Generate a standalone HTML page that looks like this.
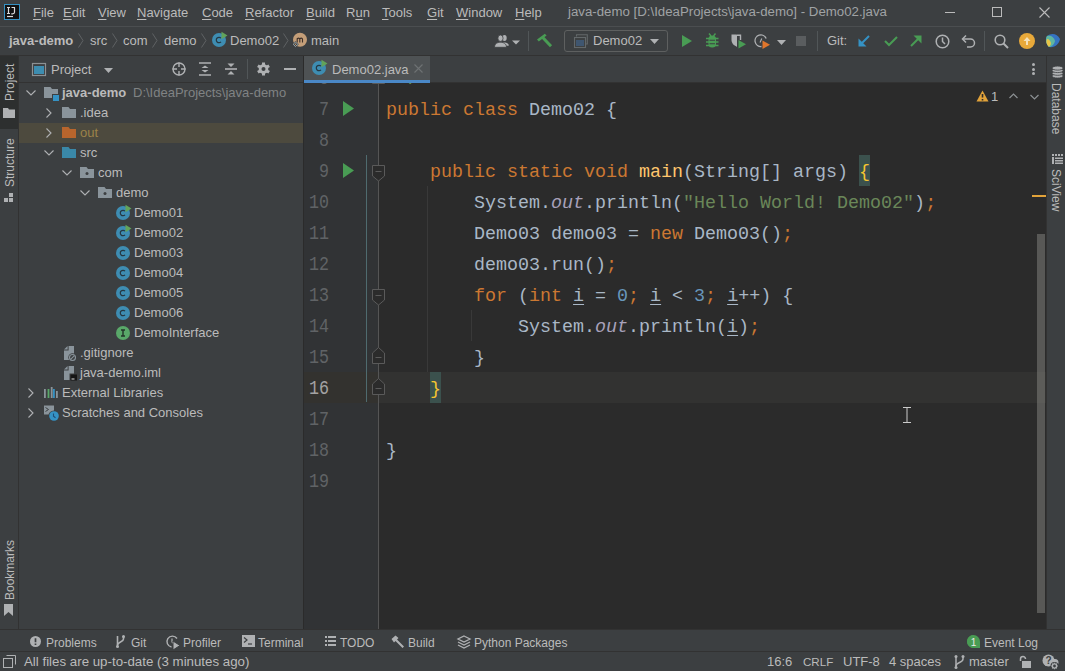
<!DOCTYPE html>
<html><head><meta charset="utf-8">
<style>
*{box-sizing:border-box;margin:0;padding:0}
html,body{width:1065px;height:671px;overflow:hidden;background:#3C3F41}
body{position:relative;font-family:"Liberation Sans",sans-serif;font-size:13px;color:#BBBBBB}
.a{position:absolute}
.t{position:absolute;white-space:nowrap;line-height:16px}
svg{position:absolute;overflow:visible}
.code{font-family:"Liberation Mono",monospace;font-size:19px;white-space:pre;position:absolute;line-height:31px;color:#A9B7C6;transform:scaleX(0.96491);transform-origin:0 0}
.kw{color:#CC7832}
.fn{color:#FFC66D}
.st{color:#6A8759}
.nu{color:#6897BB}
.sf{color:#A8A1BA;font-style:italic}
.u{text-decoration:underline;text-underline-offset:3px;text-decoration-thickness:1px}
.ln{position:absolute;font-family:"Liberation Mono",monospace;font-size:20px;color:#606366;line-height:31px;text-align:right;width:30px;transform:scaleX(0.8333);transform-origin:100% 0}
.mi u{text-decoration:underline;text-underline-offset:2px}
</style></head><body>
<svg width="0" height="0" style="position:absolute"><defs>
<g id="cls"><circle cx="7" cy="7" r="7" fill="#3E8DB2"/><path d="M9 5.2A2.7 2.7 0 1 0 9 8.8" stroke="#253843" stroke-width="1.2" fill="none"/></g>
<g id="clsrun"><use href="#cls"/><path d="M9.5 -1.2L15.5 2.5L9.5 6.2Z" fill="#62A35A"/></g>
</defs></svg>


<!-- ============ MENU BAR ============ -->
<div class="a" style="left:0;top:0;width:1065px;height:26px;background:#3C3F41"></div>
<div class="a" style="left:0;top:26px;width:1065px;height:1px;background:#4B4E50"></div>
<!-- logo -->
<div class="a" style="left:4px;top:4px;width:16px;height:16px;border:1px solid #3592C4;background:#111"></div>
<svg style="left:5px;top:5px" width="14" height="14"><g stroke="#DDDDDD" stroke-width="1.2" fill="none"><path d="M2 2.5H5M3.5 2.5V8.5M2 8.5H5"/><path d="M6.5 2.5H10M9.5 2.5V7.3C9.5 8.5 8.5 8.8 7.5 8.8H6.3"/><path d="M2 11.5H8"/></g></svg>

<div class="t mi" style="left:33px;top:5px"><u>F</u>ile</div>
<div class="t mi" style="left:63px;top:5px"><u>E</u>dit</div>
<div class="t mi" style="left:98px;top:5px"><u>V</u>iew</div>
<div class="t mi" style="left:137px;top:5px"><u>N</u>avigate</div>
<div class="t mi" style="left:202px;top:5px"><u>C</u>ode</div>
<div class="t mi" style="left:245px;top:5px"><u>R</u>efactor</div>
<div class="t mi" style="left:306px;top:5px"><u>B</u>uild</div>
<div class="t mi" style="left:346px;top:5px">R<u>u</u>n</div>
<div class="t mi" style="left:382px;top:5px"><u>T</u>ools</div>
<div class="t mi" style="left:427px;top:5px"><u>G</u>it</div>
<div class="t mi" style="left:456px;top:5px"><u>W</u>indow</div>
<div class="t mi" style="left:515px;top:5px"><u>H</u>elp</div>
<div class="t" style="left:568px;top:4px;color:#A0A3A5;font-size:13.25px">java-demo [D:\IdeaProjects\java-demo] - Demo02.java</div>

<!-- window controls -->
<div class="a" style="left:945px;top:12px;width:10px;height:1px;background:#BBB"></div>
<div class="a" style="left:992px;top:7px;width:10px;height:10px;border:1px solid #BBB"></div>
<svg style="left:1039px;top:7px" width="11" height="11"><path d="M0.5 0.5L10.5 10.5M10.5 0.5L0.5 10.5" stroke="#BBB" stroke-width="1.1"/></svg>

<!-- ============ NAV BAR ============ -->
<div class="a" style="left:0;top:27px;width:1065px;height:28px;background:#3C3F41"></div>
<div class="a" style="left:0;top:55px;width:1065px;height:1px;background:#323232"></div>


<!-- breadcrumbs -->
<div class="t" style="left:9px;top:33px;font-weight:bold">java-demo</div>
<svg style="left:78px;top:33px" width="6" height="15"><path d="M0.5 0.5L5 7.5L0.5 14.5" stroke="#5F6264" stroke-width="1" fill="none"/></svg>
<div class="t" style="left:90px;top:33px">src</div>
<svg style="left:112px;top:33px" width="6" height="15"><path d="M0.5 0.5L5 7.5L0.5 14.5" stroke="#5F6264" stroke-width="1" fill="none"/></svg>
<div class="t" style="left:123px;top:33px">com</div>
<svg style="left:152px;top:33px" width="6" height="15"><path d="M0.5 0.5L5 7.5L0.5 14.5" stroke="#5F6264" stroke-width="1" fill="none"/></svg>
<div class="t" style="left:164px;top:33px">demo</div>
<svg style="left:201px;top:33px" width="6" height="15"><path d="M0.5 0.5L5 7.5L0.5 14.5" stroke="#5F6264" stroke-width="1" fill="none"/></svg>
<svg style="left:212px;top:33px" width="16" height="16"><use href="#clsrun"/></svg>
<div class="t" style="left:230px;top:33px">Demo02</div>
<svg style="left:283px;top:33px" width="6" height="15"><path d="M0.5 0.5L5 7.5L0.5 14.5" stroke="#5F6264" stroke-width="1" fill="none"/></svg>
<svg style="left:292px;top:33px" width="16" height="16"><circle cx="8" cy="6.8" r="7" fill="#C49E78"/><path d="M5.2 9.6V5.2M5.2 6.2C5.2 5.4 5.8 5.1 6.5 5.1C7.3 5.1 7.8 5.5 7.8 6.3V9.6M7.8 6.2C7.8 5.4 8.4 5.1 9.2 5.1C10 5.1 10.5 5.5 10.5 6.3V9.6" stroke="#3D3029" stroke-width="1.1" fill="none"/><path d="M3.5 8L6.8 11.3L3.5 14.6L0.2 11.3Z" fill="#3C3F41"/><path d="M3.5 9L5.8 11.3L3.5 13.6L1.2 11.3Z" fill="none" stroke="#9BA6AA" stroke-width="1"/><circle cx="3.5" cy="11.3" r="0.7" fill="#C49E78"/></svg>
<div class="t" style="left:311px;top:33px">main</div>

<!-- toolbar -->
<svg style="left:494px;top:33px" width="28" height="16"><ellipse cx="10.5" cy="5" rx="2.2" ry="3" fill="#AFB1B3"/><path d="M9 9.5C12 9.5 14.5 10 15 12.5L12 13Z" fill="#AFB1B3"/><ellipse cx="6.5" cy="5.2" rx="2.6" ry="3.2" fill="#AFB1B3" stroke="#3C3F41" stroke-width="0.8"/><path d="M0.5 14.3C0.5 10.5 3.5 9.3 6.5 9.3C9.5 9.3 12.5 10.5 12.5 14.3Z" fill="#AFB1B3" stroke="#3C3F41" stroke-width="0.8"/><path d="M18 7.5H26L22 11.5Z" fill="#AFB1B3"/></svg>
<div class="a" style="left:528px;top:31px;width:1px;height:20px;background:#515658"></div>
<svg style="left:537px;top:33px" width="16" height="16"><path d="M0 6.6L7.8 0.8L9.6 2.6L1.8 8.6Z" fill="#499C54"/><path d="M5.5 4.2L14 13.2" stroke="#499C54" stroke-width="3"/></svg>
<div class="a" style="left:564px;top:30px;width:104px;height:22px;border:1px solid #5E6060;border-radius:3px"></div>
<svg style="left:574px;top:34px" width="16" height="15"><path d="M2.5 2.5V0.7H13.3V10H11.5" stroke="#63686A" stroke-width="1.1" fill="none"/><rect x="0.5" y="3.5" width="11" height="10" fill="#3C3F41" stroke="#63686A" stroke-width="1.1"/><rect x="2" y="6" width="8" height="6" fill="#3F5670"/></svg>
<div class="t" style="left:593px;top:33px">Demo02</div>
<svg style="left:650px;top:39px" width="9" height="6"><path d="M0 0H9L4.5 5Z" fill="#AFB1B3"/></svg>
<svg style="left:682px;top:35px" width="10" height="12"><path d="M0 0L10 6L0 12Z" fill="#499C54"/></svg>
<svg style="left:706px;top:33px" width="13" height="15"><path d="M3 0.5L5 3M9.5 0.5L7.5 3" stroke="#499C54" stroke-width="1.4"/><rect x="2.5" y="2.5" width="7.5" height="12" rx="3.5" fill="#499C54"/><path d="M0 5.5H12.5M0 9H12.5M0 12.5H12.5" stroke="#499C54" stroke-width="1.5"/><path d="M3.5 7.2H9M3.5 10.7H9" stroke="#3C3F41" stroke-width="1.1"/></svg>
<svg style="left:731px;top:34px" width="16" height="15"><path d="M0.5 0.5H5.5V12.5C3 11.5 0.5 9.5 0.5 6Z" fill="#AFB1B3"/><path d="M5.5 1.2H9.5V6" stroke="#AFB1B3" stroke-width="1.4" fill="none"/><path d="M5.5 1V12.5" stroke="#AFB1B3" stroke-width="1"/><path d="M7.5 6L15 10.2L7.5 14.5Z" fill="#499C54"/></svg>
<svg style="left:755px;top:34px" width="16" height="15"><path d="M11.2 4.5A5.8 5.8 0 1 0 6.5 12.5" stroke="#AFB1B3" stroke-width="1.3" fill="none"/><path d="M6.8 4.5L5 8.5" stroke="#AFB1B3" stroke-width="1.1"/><path d="M7.5 6.5L15 10.7L7.5 15Z" fill="#E0762C"/></svg>
<svg style="left:777px;top:39.5px" width="9" height="6"><path d="M0 0H9L4.5 5Z" fill="#AFB1B3"/></svg>
<div class="a" style="left:796px;top:36px;width:10px;height:10px;background:#5A5D5F"></div>
<div class="a" style="left:817px;top:31px;width:1px;height:20px;background:#515658"></div>
<div class="t" style="left:827px;top:33px">Git:</div>
<svg style="left:858px;top:35px" width="12" height="12"><path d="M11 1L4 8" stroke="#3592C4" stroke-width="2"/><path d="M0.5 3.5V11.5H8.5Z" fill="#3592C4"/></svg>
<svg style="left:884px;top:35px" width="14" height="12"><path d="M1 6L5 10L13 2" stroke="#499C54" stroke-width="2" fill="none"/></svg>
<svg style="left:910px;top:35px" width="12" height="12"><path d="M1 11L8 4" stroke="#499C54" stroke-width="2"/><path d="M3.5 0.5H11.5V8.5Z" fill="#499C54"/></svg>
<svg style="left:935px;top:34px" width="15" height="15"><circle cx="7.5" cy="7.5" r="6.3" stroke="#AFB1B3" stroke-width="1.5" fill="none"/><path d="M7.5 3.5V7.5L10 10" stroke="#AFB1B3" stroke-width="1.5" fill="none"/></svg>
<svg style="left:961px;top:34px" width="15" height="14"><path d="M2 5H9.5A4 4 0 0 1 9.5 13H6" stroke="#AFB1B3" stroke-width="1.5" fill="none"/><path d="M5 1.5L1.5 5L5 8.5" stroke="#AFB1B3" stroke-width="1.5" fill="none"/></svg>
<div class="a" style="left:984px;top:31px;width:1px;height:20px;background:#515658"></div>
<svg style="left:994px;top:34px" width="15" height="15"><circle cx="6" cy="6" r="4.8" stroke="#AFB1B3" stroke-width="1.6" fill="none"/><path d="M9.5 9.5L14 14" stroke="#AFB1B3" stroke-width="2"/></svg>
<svg style="left:1019px;top:33px" width="16" height="16"><circle cx="8" cy="8" r="8" fill="#E8A93A"/><path d="M8 4L11.5 8H9V12H7V8H4.5Z" fill="#F5E1B8"/></svg>
<svg style="left:1045px;top:33px" width="16" height="16"><path d="M2 3C6 0 12 0 15 6C14 11 10 15 4 14C1 11 0 6 2 3Z" fill="#3574C2"/><path d="M2 3C6 2 9 4 10 8C9 12 6 14 4 14C1 11 0 6 2 3Z" fill="#5FB6A0"/><path d="M2 6C4 6 6 8 6 11C5 13 4 14 3.5 13.5C1 11 1 8 2 6Z" fill="#E8C547"/></svg>

<!-- ============ LEFT STRIPE ============ -->
<div class="a" style="left:0;top:56px;width:18px;height:574px;background:#3C3F41"></div>
<div class="a" style="left:18px;top:56px;width:1px;height:574px;background:#323232"></div>
<div class="a" style="left:0;top:56px;width:18px;height:73px;background:#2D2F2F"></div>
<div class="t" style="left:2px;top:101px;transform-origin:0 0;transform:rotate(-90deg);font-size:12px;width:40px">Project</div>
<svg style="left:3px;top:108px" width="12" height="10"><path d="M0 0H5L6 1.5H12V10H0Z" fill="#AFB1B3"/></svg>
<div class="t" style="left:2px;top:187px;transform-origin:0 0;transform:rotate(-90deg);font-size:12px;width:60px">Structure</div>
<svg style="left:4px;top:193px" width="10" height="10"><rect x="5" y="0" width="4" height="4" fill="#AFB1B3"/><rect x="0" y="5" width="4" height="4" fill="#AFB1B3"/><rect x="5" y="5" width="4" height="4" fill="#AFB1B3"/></svg>
<div class="t" style="left:2px;top:600px;transform-origin:0 0;transform:rotate(-90deg);font-size:12px;width:70px">Bookmarks</div>
<svg style="left:4px;top:604px" width="10" height="12"><path d="M0 0H9V12L4.5 8L0 12Z" fill="#AFB1B3"/></svg>


<!-- ============ PROJECT PANEL ============ -->
<div class="a" style="left:19px;top:56px;width:284px;height:574px;background:#3C3F41"></div>
<div class="a" style="left:19px;top:82px;width:284px;height:1px;background:#323232"></div>
<svg style="left:32px;top:63px" width="15" height="14"><rect x="0.5" y="0.5" width="13" height="12" fill="none" stroke="#8C9194" stroke-width="1.2"/><rect x="2" y="3" width="10" height="8" fill="#3D8DB0"/></svg>
<div class="t" style="left:51px;top:62px">Project</div>
<svg style="left:104px;top:68px" width="9" height="6"><path d="M0 0H9L4.5 5Z" fill="#AFB1B3"/></svg>
<svg style="left:172px;top:62px" width="15" height="15"><circle cx="7" cy="7" r="6" stroke="#AFB1B3" stroke-width="1.4" fill="none"/><path d="M7 0.5V5M7 9V13.5M0.5 7H5M9 7H13.5" stroke="#AFB1B3" stroke-width="1.4"/></svg>
<svg style="left:199px;top:62px" width="13" height="14"><path d="M0 1H12M0 13H12" stroke="#AFB1B3" stroke-width="1.6"/><path d="M6 3.5L9.5 6H2.5ZM6 10.5L9.5 8H2.5Z" fill="#AFB1B3"/></svg>
<svg style="left:225px;top:62px" width="13" height="14"><path d="M0 7H12" stroke="#AFB1B3" stroke-width="1.6"/><path d="M6 5L9.5 1.5H2.5ZM6 9L9.5 12.5H2.5Z" fill="#AFB1B3"/></svg>
<div class="a" style="left:247px;top:59px;width:1px;height:20px;background:#515658"></div>
<svg style="left:257px;top:62px" width="14" height="14"><g fill="#AFB1B3"><circle cx="6.5" cy="7" r="4.8"/><rect x="5" y="0.5" width="3" height="3"/><rect x="5" y="10.5" width="3" height="3"/><rect x="5" y="0.5" width="3" height="3" transform="rotate(60 6.5 7)"/><rect x="5" y="10.5" width="3" height="3" transform="rotate(60 6.5 7)"/><rect x="5" y="0.5" width="3" height="3" transform="rotate(-60 6.5 7)"/><rect x="5" y="10.5" width="3" height="3" transform="rotate(-60 6.5 7)"/></g><circle cx="6.5" cy="7" r="2" fill="#3C3F41"/></svg>
<div class="a" style="left:284px;top:68px;width:12px;height:2px;background:#AFB1B3"></div>

<div class="a" style="left:19px;top:123px;width:284px;height:20px;background:#4D4A3E"></div>
<svg style="left:26px;top:90px" width="10" height="6"><path d="M0.5 0.5L5 5L9.5 0.5" stroke="#AFB1B3" stroke-width="1.1" fill="none"/></svg><svg style="left:44px;top:87px" width="16" height="14"><path d="M0 0H6.5L8 2H14V11H0Z" fill="#8A949B"/><rect x="8" y="7" width="8" height="7" fill="#3C3F41"/><rect x="9" y="8" width="6" height="6" fill="#3592C4"/></svg><div class="t" style="left:62px;top:85px;font-weight:bold">java-demo</div><div class="t" style="left:133px;top:85px;color:#808384">D:\IdeaProjects\java-demo</div><svg style="left:46px;top:108px" width="6" height="10"><path d="M0.5 0.5L5 5L0.5 9.5" stroke="#AFB1B3" stroke-width="1.1" fill="none"/></svg><svg style="left:62px;top:107px" width="16" height="14"><path d="M0 0H6.5L8 2H14V11H0Z" fill="#8A949B"/></svg><div class="t" style="left:80px;top:105px">.idea</div><svg style="left:46px;top:128px" width="6" height="10"><path d="M0.5 0.5L5 5L0.5 9.5" stroke="#AFB1B3" stroke-width="1.1" fill="none"/></svg><svg style="left:62px;top:127px" width="16" height="14"><path d="M0 0H6.5L8 2H14V11H0Z" fill="#B8652D"/></svg><div class="t" style="left:80px;top:125px;color:#9C8249">out</div><svg style="left:44px;top:150px" width="10" height="6"><path d="M0.5 0.5L5 5L9.5 0.5" stroke="#AFB1B3" stroke-width="1.1" fill="none"/></svg><svg style="left:62px;top:147px" width="16" height="14"><path d="M0 0H6.5L8 2H14V11H0Z" fill="#3A88A8"/></svg><div class="t" style="left:80px;top:145px">src</div><svg style="left:62px;top:170px" width="10" height="6"><path d="M0.5 0.5L5 5L9.5 0.5" stroke="#AFB1B3" stroke-width="1.1" fill="none"/></svg><svg style="left:80px;top:167px" width="16" height="14"><path d="M0 0H6.5L8 2H14V11H0Z" fill="#8A949B"/><circle cx="7" cy="6.5" r="1.5" fill="#3C3F41"/></svg><div class="t" style="left:98px;top:165px">com</div><svg style="left:80px;top:190px" width="10" height="6"><path d="M0.5 0.5L5 5L9.5 0.5" stroke="#AFB1B3" stroke-width="1.1" fill="none"/></svg><svg style="left:98px;top:187px" width="16" height="14"><path d="M0 0H6.5L8 2H14V11H0Z" fill="#8A949B"/><circle cx="7" cy="6.5" r="1.5" fill="#3C3F41"/></svg><div class="t" style="left:116px;top:185px">demo</div><svg style="left:116px;top:206px" width="15" height="15"><use href="#clsrun"/></svg><div class="t" style="left:134px;top:205px">Demo01</div><svg style="left:116px;top:226px" width="15" height="15"><use href="#clsrun"/></svg><div class="t" style="left:134px;top:225px">Demo02</div><svg style="left:116px;top:246px" width="15" height="15"><use href="#cls"/></svg><div class="t" style="left:134px;top:245px">Demo03</div><svg style="left:116px;top:266px" width="15" height="15"><use href="#cls"/></svg><div class="t" style="left:134px;top:265px">Demo04</div><svg style="left:116px;top:286px" width="15" height="15"><use href="#cls"/></svg><div class="t" style="left:134px;top:285px">Demo05</div><svg style="left:116px;top:306px" width="15" height="15"><use href="#cls"/></svg><div class="t" style="left:134px;top:305px">Demo06</div><svg style="left:116px;top:326px" width="15" height="15"><circle cx="7" cy="7" r="7" fill="#59A869"/><path d="M5 4H9M5 10H9M7 4V10" stroke="#23342A" stroke-width="1.4"/></svg><div class="t" style="left:134px;top:325px">DemoInterface</div><svg style="left:64px;top:346px" width="14" height="16"><path d="M4.6 0H10V14H0V4.6H4.6Z" fill="#8A949B"/><path d="M0 3.6L3.6 0V3.6Z" fill="#8A949B"/><circle cx="8.5" cy="11.5" r="4.2" fill="#3C3F41"/><circle cx="8.5" cy="11.5" r="3" stroke="#8A949B" stroke-width="1.1" fill="none"/><path d="M6.6 13.4L10.4 9.6" stroke="#8A949B" stroke-width="1.1"/></svg><div class="t" style="left:80px;top:345px">.gitignore</div><svg style="left:64px;top:366px" width="14" height="16"><path d="M4.6 0H10V14H0V4.6H4.6Z" fill="#8A949B"/><path d="M0 3.6L3.6 0V3.6Z" fill="#8A949B"/><rect x="5.5" y="7.5" width="8" height="7" fill="#3C3F41"/><rect x="6.5" y="8.5" width="6.5" height="6" fill="#151515"/><rect x="7.5" y="12.5" width="3" height="1" fill="#DDDDDD"/></svg><div class="t" style="left:80px;top:365px">java-demo.iml</div><svg style="left:28px;top:388px" width="6" height="10"><path d="M0.5 0.5L5 5L0.5 9.5" stroke="#AFB1B3" stroke-width="1.1" fill="none"/></svg><svg style="left:43px;top:386px" width="16" height="13"><rect x="1" y="3" width="1.8" height="9" fill="#8A949B"/><rect x="4.6" y="3" width="1.8" height="9" fill="#59A869"/><rect x="7.8" y="1" width="1.8" height="11" fill="#8A949B"/><rect x="10" y="3" width="1.8" height="9" fill="#3592C4"/><rect x="13" y="5" width="1.8" height="7" fill="#8A949B"/></svg><div class="t" style="left:62px;top:385px">External Libraries</div><svg style="left:28px;top:408px" width="6" height="10"><path d="M0.5 0.5L5 5L0.5 9.5" stroke="#AFB1B3" stroke-width="1.1" fill="none"/></svg><svg style="left:44px;top:405px" width="16" height="17"><path d="M0 0.5H10V9.5H0Z" fill="#8A949B"/><path d="M1.5 2.5L4.5 4.5L1.5 6.5" stroke="#3C3F41" stroke-width="1" fill="none"/><circle cx="10" cy="11" r="5.6" fill="#3C3F41"/><circle cx="10" cy="11" r="4.8" fill="#3592C4"/><path d="M9.5 8.5V11.2L11.5 12.8" stroke="#1F4F78" stroke-width="1.1" fill="none"/></svg><div class="t" style="left:62px;top:405px">Scratches and Consoles</div>

<!-- ============ EDITOR ============ -->
<div class="a" style="left:303px;top:56px;width:1px;height:573px;background:#2B2B2B"></div>
<div class="a" style="left:304px;top:56px;width:742px;height:27px;background:#3C3F41"></div>
<div class="a" style="left:304px;top:82px;width:742px;height:1px;background:#323232"></div>
<div class="a" style="left:304px;top:56px;width:126px;height:27px;background:#4E5254"></div>
<div class="a" style="left:304px;top:80px;width:126px;height:3px;background:#4A88C7"></div>
<svg style="left:312px;top:61px" width="16" height="16"><use href="#clsrun"/></svg>
<div class="t" style="left:332px;top:62px">Demo02.java</div>
<svg style="left:414px;top:64px" width="9" height="9"><path d="M0.5 0.5L8.5 8.5M8.5 0.5L0.5 8.5" stroke="#6E7274" stroke-width="1.1"/></svg>
<div class="a" style="left:1032px;top:63px;width:3px;height:3px;border-radius:2px;background:#AFB1B3"></div>
<div class="a" style="left:1032px;top:68px;width:3px;height:3px;border-radius:2px;background:#AFB1B3"></div>
<div class="a" style="left:1032px;top:72px;width:3px;height:3px;border-radius:2px;background:#AFB1B3"></div>

<div class="a" style="left:304px;top:83px;width:742px;height:546px;background:#2B2B2B;overflow:hidden" id="ed">
<div class="a" style="left:0;top:0;width:74px;height:546px;background:#313335"></div><div class="a" style="left:0;top:289px;width:742px;height:31px;background:#323231"></div><div class="a" style="left:0;top:289px;width:74px;height:31px;background:#33322F"></div><div class="a" style="left:74px;top:0;width:1px;height:546px;background:#555555"></div><div class="a" style="left:62px;top:72px;width:1px;height:247px;background:#4F6B6F"></div><div class="a" style="left:123px;top:103px;width:1px;height:186px;background:#393939"></div><div class="a" style="left:167px;top:227px;width:1px;height:31px;background:#393939"></div><div class="a" style="left:555px;top:72px;width:11px;height:31px;background:#3B514D"></div><div class="a" style="left:126px;top:289px;width:11px;height:31px;background:#3B514D"></div><svg style="left:68px;top:-1px" width="14" height="3"><path d="M0.5 0V1.5H12.5V0" fill="none" stroke="#5A5A5A"/></svg><svg style="left:68px;top:82px" width="14" height="17"><path d="M0.5 0.5H12.5V11L6.5 16L0.5 11Z" fill="#2B2B2B" stroke="#5A5A5A" stroke-width="1"/><path d="M3.5 6.5H9.5" stroke="#5A5A5A" stroke-width="1"/></svg><svg style="left:68px;top:206px" width="14" height="17"><path d="M0.5 0.5H12.5V11L6.5 16L0.5 11Z" fill="#2B2B2B" stroke="#5A5A5A" stroke-width="1"/><path d="M3.5 6.5H9.5" stroke="#5A5A5A" stroke-width="1"/></svg><svg style="left:68px;top:264px" width="14" height="17"><path d="M0.5 16.5H12.5V6L6.5 0.5L0.5 6Z" fill="#2B2B2B" stroke="#5A5A5A" stroke-width="1"/><path d="M3.5 10.5H9.5" stroke="#5A5A5A" stroke-width="1"/></svg><svg style="left:68px;top:295px" width="14" height="17"><path d="M0.5 16.5H12.5V6L6.5 0.5L0.5 6Z" fill="#2B2B2B" stroke="#5A5A5A" stroke-width="1"/><path d="M3.5 10.5H9.5" stroke="#5A5A5A" stroke-width="1"/></svg><svg style="left:39px;top:18px" width="12" height="15"><path d="M0 0L11 7.5L0 15Z" fill="#499C54"/></svg><svg style="left:39px;top:80px" width="12" height="15"><path d="M0 0L11 7.5L0 15Z" fill="#499C54"/></svg><div class="ln" style="left:-9px;top:-20px;width:34px;color:#606366">6</div><div class="ln" style="left:-9px;top:11px;width:34px;color:#606366">7</div><div class="ln" style="left:-9px;top:42px;width:34px;color:#606366">8</div><div class="ln" style="left:-9px;top:73px;width:34px;color:#606366">9</div><div class="ln" style="left:-9px;top:104px;width:34px;color:#606366">10</div><div class="ln" style="left:-9px;top:135px;width:34px;color:#606366">11</div><div class="ln" style="left:-9px;top:166px;width:34px;color:#606366">12</div><div class="ln" style="left:-9px;top:197px;width:34px;color:#606366">13</div><div class="ln" style="left:-9px;top:228px;width:34px;color:#606366">14</div><div class="ln" style="left:-9px;top:259px;width:34px;color:#606366">15</div><div class="ln" style="left:-9px;top:290px;width:34px;color:#A4A3A3">16</div><div class="ln" style="left:-9px;top:321px;width:34px;color:#606366">17</div><div class="ln" style="left:-9px;top:352px;width:34px;color:#606366">18</div><div class="ln" style="left:-9px;top:383px;width:34px;color:#606366">19</div><div class="code" style="left:82px;top:-19px"><span style="color:#629755"> */</span></div><div class="code" style="left:82px;top:12px"><span class="kw">public class </span>Demo02 {</div><div class="code" style="left:82px;top:74px">    <span class="kw">public static void </span><span class="fn">main</span>(String[] args) <span style="color:#F5C530">{</span></div><div class="code" style="left:82px;top:105px">        System.<span class="sf">out</span>.println(<span class="st">"Hello World! Demo02"</span>)<span class="kw">;</span></div><div class="code" style="left:82px;top:136px">        Demo03 demo03 = <span class="kw">new </span>Demo03()<span class="kw">;</span></div><div class="code" style="left:82px;top:167px">        demo03.run()<span class="kw">;</span></div><div class="code" style="left:82px;top:198px">        <span class="kw">for </span>(<span class="kw">int </span><span class="u">i</span> = <span class="nu">0</span><span class="kw">; </span><span class="u">i</span> &lt; <span class="nu">3</span><span class="kw">; </span><span class="u">i</span>++) {</div><div class="code" style="left:82px;top:229px">            System.<span class="sf">out</span>.println(<span class="u">i</span>)<span class="kw">;</span></div><div class="code" style="left:82px;top:260px">        }</div><div class="code" style="left:82px;top:291px">    <span style="color:#F5C530">}</span></div><div class="code" style="left:82px;top:353px">}</div></div>
<svg style="left:976px;top:90px" width="13" height="12"><path d="M6.5 0.5L12.5 11.5H0.5Z" fill="#E2A33A"/><path d="M6.5 4V7.5M6.5 9V10.5" stroke="#2B2B2B" stroke-width="1.6"/></svg>
<div class="t" style="left:991px;top:89px;color:#BBBBBB">1</div>
<svg style="left:1009px;top:93px" width="9" height="6"><path d="M0.5 5L4.5 1L8.5 5" stroke="#8C9194" stroke-width="1.2" fill="none"/></svg>
<svg style="left:1030px;top:94px" width="9" height="6"><path d="M0.5 1L4.5 5L8.5 1" stroke="#8C9194" stroke-width="1.2" fill="none"/></svg>
<div class="a" style="left:1032px;top:195px;width:14px;height:2px;background:#E2A33A"></div>
<div class="a" style="left:1037px;top:234px;width:8px;height:379px;background:rgba(145,145,140,0.45)"></div>
<svg style="left:902px;top:407px" width="10" height="16"><path d="M1 0.5H9M5 0.5V15.5M1 15.5H9" stroke="#CCCCCC" stroke-width="1"/></svg>


<!-- ============ RIGHT STRIPE ============ -->
<div class="a" style="left:1046px;top:56px;width:1px;height:574px;background:#323232"></div>
<div class="a" style="left:1047px;top:56px;width:18px;height:574px;background:#3C3F41"></div>
<svg style="left:1052px;top:66px" width="12" height="13"><g fill="#AFB1B3" stroke="#3C3F41" stroke-width="0.8"><ellipse cx="5.6" cy="10" rx="5.6" ry="2"/><ellipse cx="5.6" cy="7.3" rx="5.6" ry="2"/><ellipse cx="5.6" cy="4.6" rx="5.6" ry="2"/><ellipse cx="5.6" cy="2.1" rx="5.6" ry="2"/></g></svg>
<div class="t" style="left:1064px;top:83px;transform-origin:0 0;transform:rotate(90deg);font-size:12px">Database</div>
<svg style="left:1052px;top:154px" width="12" height="10"><g fill="#AFB1B3"><rect x="0" y="0" width="2" height="2"/><rect x="3" y="0" width="2" height="2"/><rect x="6" y="0" width="2" height="2"/><rect x="9" y="0" width="2" height="2"/><rect x="0" y="3" width="2" height="7"/><rect x="3" y="3.5" width="8" height="1.5"/><rect x="3" y="6" width="8" height="1.5"/><rect x="3" y="8.5" width="8" height="1.5"/></g></svg>
<div class="t" style="left:1064px;top:169px;transform-origin:0 0;transform:rotate(90deg);font-size:12px">SciView</div>

<!-- ============ BOTTOM ============ -->
<div class="a" style="left:0;top:629px;width:1065px;height:1px;background:#323232"></div>
<div class="a" style="left:0;top:630px;width:1065px;height:21px;background:#3C3F41"></div>
<div class="a" style="left:0;top:651px;width:1065px;height:1px;background:#323232"></div>
<div class="a" style="left:0;top:652px;width:1065px;height:19px;background:#3C3F41"></div>
<svg style="left:30px;top:636px" width="12" height="11"><circle cx="5.5" cy="5.5" r="5.5" fill="#AFB1B3"/><path d="M5.5 2.3V6.3M5.5 7.6V9" stroke="#3C3F41" stroke-width="1.7"/></svg>
<div class="t" style="left:46px;top:635px;font-size:12px">Problems</div>
<svg style="left:115px;top:635px" width="11" height="13"><g fill="none" stroke="#AFB1B3" stroke-width="1.6"><path d="M2.5 1V12"/><path d="M8.5 1V4C8.5 7 2.5 7 2.5 10"/></g><circle cx="2.5" cy="11.5" r="1.5" fill="#AFB1B3"/><circle cx="8.5" cy="1.5" r="1.5" fill="#AFB1B3"/></svg>
<div class="t" style="left:131px;top:635px;font-size:12px">Git</div>
<svg style="left:166px;top:635px" width="15" height="15"><path d="M11 3.5A5.5 5.5 0 1 0 5.5 12" stroke="#AFB1B3" stroke-width="1.4" fill="none"/><path d="M6 3.5V7L7.5 8.5" stroke="#AFB1B3" stroke-width="1.2" fill="none"/><path d="M7 6L14 10.5L7 15Z" fill="#AFB1B3" stroke="#3C3F41" stroke-width="1"/></svg>
<div class="t" style="left:183px;top:635px;font-size:12px">Profiler</div>
<svg style="left:242px;top:635px" width="13" height="12"><rect x="0" y="0" width="13" height="12" fill="#AFB1B3"/><path d="M2 2.5L5 5L2 7.5" stroke="#3C3F41" stroke-width="1.2" fill="none"/><path d="M6 9H10" stroke="#3C3F41" stroke-width="1.2"/></svg>
<div class="t" style="left:258px;top:635px;font-size:12px">Terminal</div>
<svg style="left:325px;top:636px" width="11" height="10"><g fill="#AFB1B3"><rect x="0" y="0" width="2" height="2"/><rect x="0" y="4" width="2" height="2"/><rect x="0" y="8" width="2" height="2"/><rect x="3" y="0" width="8" height="2"/><rect x="3" y="4" width="8" height="2"/><rect x="3" y="8" width="8" height="2"/></g></svg>
<div class="t" style="left:340px;top:635px;font-size:12px">TODO</div>
<svg style="left:391px;top:635px" width="14" height="14"><path d="M0.5 4L4.5 0.5L7.5 3L6 4.5L13 11.5L11.5 13L4.5 6L3 7.5Z" fill="#AFB1B3"/></svg>
<div class="t" style="left:408px;top:635px;font-size:12px">Build</div>
<svg style="left:457px;top:635px" width="14" height="14"><g fill="none" stroke="#AFB1B3" stroke-width="1.3"><path d="M7 1L13 4L7 7L1 4Z"/><path d="M1 7L7 10L13 7"/><path d="M1 10L7 13L13 10"/></g></svg>
<div class="t" style="left:474px;top:635px;font-size:12px">Python Packages</div>
<svg style="left:967px;top:635px" width="14" height="14"><path d="M6.5 0A6.5 6.5 0 1 0 13 6.5V13H6.5Z" fill="#499C54"/><path d="M13 6.5A6.5 6.5 0 0 0 0 6.5A6.5 6.5 0 0 0 6.5 13H13Z" fill="#499C54"/><text x="6.5" y="10.5" text-anchor="middle" font-family="Liberation Sans" font-size="10" fill="#E8E8E8">1</text></svg>
<div class="t" style="left:984px;top:635px;font-size:12px">Event Log</div>

<svg style="left:3px;top:655px" width="13" height="13"><path d="M3.5 0.5H12.5V9.5" stroke="#AFB1B3" stroke-width="1" fill="none"/><rect x="0.5" y="3.5" width="9" height="9" stroke="#AFB1B3" stroke-width="1" fill="none"/></svg>
<div class="t" style="left:24px;top:654px;font-size:13.3px">All files are up-to-date (3 minutes ago)</div>
<div class="t" style="left:767px;top:654px">16:6</div>
<div class="t" style="left:803px;top:654px;font-size:11.6px">CRLF</div>
<div class="t" style="left:843px;top:654px">UTF-8</div>
<div class="t" style="left:889px;top:654px">4 spaces</div>
<svg style="left:954px;top:655px" width="11" height="14"><g fill="none" stroke="#AFB1B3" stroke-width="1.5"><path d="M2 1V13"/><path d="M9 1V4C9 8 2 7 2 11"/></g><circle cx="2" cy="12.5" r="1.5" fill="#AFB1B3"/><circle cx="9" cy="1.5" r="1.5" fill="#AFB1B3"/><circle cx="2" cy="1.5" r="1.5" fill="#AFB1B3"/></svg>
<div class="t" style="left:969px;top:654px">master</div>
<svg style="left:1019px;top:656px" width="12" height="12"><path d="M1.5 5V3A2.5 2.5 0 0 1 6.5 3" stroke="#AFB1B3" stroke-width="1.5" fill="none"/><rect x="3" y="5" width="9" height="7" fill="#AFB1B3"/></svg>
<svg style="left:1042px;top:654px" width="18" height="16"><circle cx="6.5" cy="6.5" r="6" fill="#AFB1B3"/><path d="M6.5 5H13A3.5 3.5 0 0 1 13 12H3Z" fill="#AFB1B3"/><text x="6.5" y="10.3" text-anchor="middle" font-family="Liberation Sans" font-weight="bold" font-size="10" fill="#3C3F41">?</text><circle cx="12.5" cy="12" r="4" fill="#3C3F41"/><circle cx="12.5" cy="12" r="2.1" fill="none" stroke="#AFB1B3" stroke-width="1.4"/><path d="M12.5 8.7V9.8M12.5 14.2V15.3M9.2 12H10.3M14.7 12H15.8M10.2 9.7L11 10.5M14 13.5L14.8 14.3M14.8 9.7L14 10.5M11 13.5L10.2 14.3" stroke="#AFB1B3" stroke-width="1.1"/></svg>


</body></html>
